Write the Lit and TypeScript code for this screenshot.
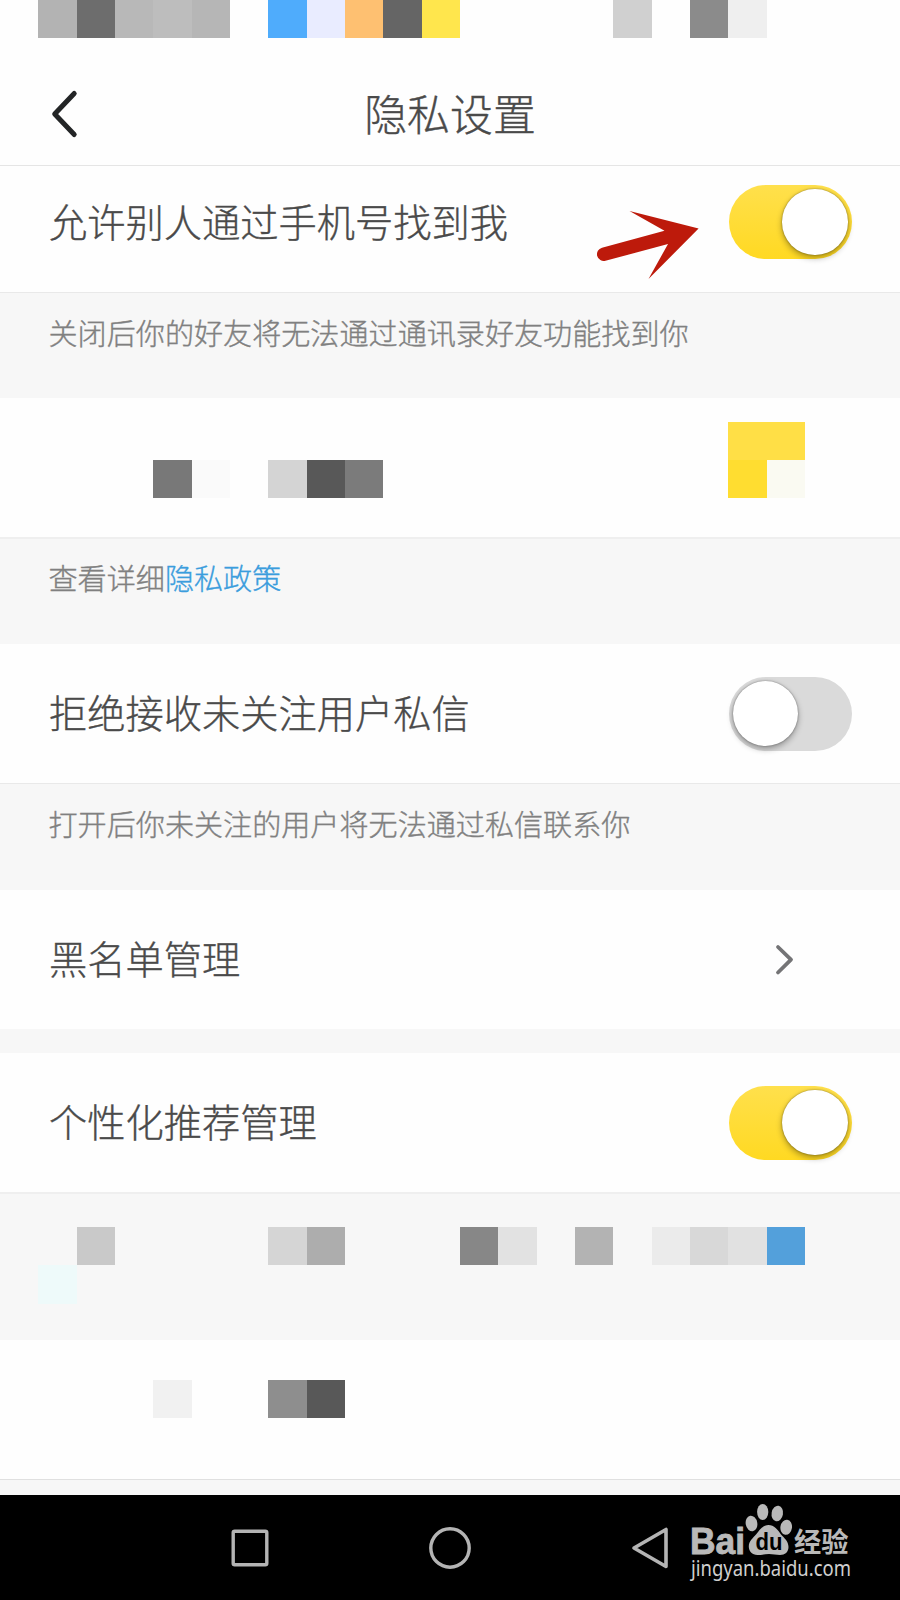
import { LitElement, html, css } from "lit";
import { customElement, property } from "lit/decorators.js";

// One mosaic tile: column, row, colour
type Tile = [number, number, string];

const STATUS: Tile[] = [
  [1, 1, "#b3b3b3"], [2, 1, "#6d6d6d"], [3, 1, "#b8b8b8"], [4, 1, "#bdbdbd"], [5, 1, "#b6b6b6"],
  [7, 1, "#4facfc"], [8, 1, "#e9ecff"], [9, 1, "#fec071"], [10, 1, "#656565"], [11, 1, "#ffe64d"],
  [16, 1, "#d0d0d0"], [18, 1, "#8b8b8b"], [19, 1, "#efefef"],
];
const HIDDEN_SWITCH: Tile[] = [
  [19, 1, "#ffdf46"], [20, 1, "#ffdf46"],
  [4, 2, "#787878"], [5, 2, "#fafafa"], [7, 2, "#d4d4d4"], [8, 2, "#585858"], [9, 2, "#7b7b7b"],
  [19, 2, "#ffdd30"], [20, 2, "#fafaf2"],
];
const HIDDEN_NOTE: Tile[] = [
  [2, 1, "#c9c9c9"], [7, 1, "#d5d5d5"], [8, 1, "#adadad"], [12, 1, "#878787"], [13, 1, "#e2e2e2"],
  [15, 1, "#b3b3b3"], [17, 1, "#ebebeb"], [18, 1, "#d8d8d8"], [19, 1, "#e1e1e1"], [20, 1, "#53a0db"],
  [1, 2, "#eefafa"],
];
const HIDDEN_ROW: Tile[] = [[4, 1, "#f1f1f1"], [7, 1, "#8e8e8e"], [8, 1, "#585858"]];

@customElement("mosaic-strip")
export class MosaicStrip extends LitElement {
  @property({ attribute: false }) tiles: Tile[] = [];

  static styles = css`
    :host {
      display: grid;
      grid-template-columns: repeat(23, 38.333px);
      grid-auto-rows: 38.333px;
    }
  `;

  render() {
    return this.tiles.map(
      ([c, r, colour]) => html`<i style="grid-column:${c + 1};grid-row:${r};background:${colour}"></i>`
    );
  }
}

@customElement("toggle-switch")
export class ToggleSwitch extends LitElement {
  @property({ type: Boolean, reflect: true }) on = false;

  static styles = css`
    :host {
      display: flex;
      align-items: center;
      box-sizing: border-box;
      width: 122.6px;
      height: 74px;
      padding: 0 4px;
      border-radius: 37px;
      background: #dadada;
    }
    :host([on]) {
      justify-content: flex-end;
      background: linear-gradient(#ffe04c, #ffd922);
    }
    .knob {
      width: 65.4px;
      height: 65.4px;
      border-radius: 50%;
      background: #fff;
      box-shadow: 0 0 2px rgba(0, 0, 0, 0.42), 0 3px 6px rgba(0, 0, 0, 0.33);
    }
  `;

  render() {
    return html`<div class="knob"></div>`;
  }
}

@customElement("app-root")
export class AppRoot extends LitElement {
  static styles = css`
    :host {
      display: flex;
      flex-direction: column;
      position: relative;
      width: 900px;
      height: 1600px;
      overflow: hidden;
      background: #f7f7f7;
      color: #4a4a4a;
      font-family: "Noto Sans CJK SC", sans-serif;
      font-weight: 300;
      -webkit-text-stroke: 0.35px currentColor;
    }
    .top {
      box-sizing: border-box;
      height: 166px;
      flex: none;
      background: #fefefe;
      border-bottom: 1px solid #e5e5e5;
    }
    .header {
      display: grid;
      grid-template-columns: 120px 1fr 120px;
      align-items: center;
      height: 150px;
    }
    .header svg {
      margin: 2px 0 0 48px;
    }
    h1 {
      margin: 0;
      padding-bottom: 3px;
      text-align: center;
      font-size: 42.9px;
      line-height: 60px;
      font-weight: 300;
    }
    .row {
      display: flex;
      align-items: center;
      justify-content: space-between;
      box-sizing: border-box;
      height: 139px;
      flex: none;
      padding: 0 48.5px 0 49px;
      background: #fefefe;
      font-size: 38.25px;
      line-height: 56px;
    }
    .row span {
      padding-bottom: 3px;
    }
    .row.first {
      height: 126px;
      padding-bottom: 14px;
    }
    .row.masked {
      align-items: flex-start;
      padding: 23.7px 0 0;
    }
    .row.masked.low {
      padding-top: 40px;
    }
    .chevron {
      margin-right: 55px;
    }
    .note {
      box-sizing: border-box;
      flex: none;
      height: 106px;
      padding: 18px 48.5px 0;
      border-top: 1px solid #e9e9e9;
      background: #f7f7f7;
      color: #808080;
      font-size: 29.1px;
      line-height: 42px;
    }
    .note.tall {
      height: 107px;
    }
    .note.soft {
      height: 107px;
      padding-top: 17px;
      border-top: 2px solid #efefef;
    }
    .note.masked {
      height: 148px;
      padding: 33px 0 0;
      border-top: 2px solid #efefef;
    }
    .link {
      color: #3b9ddd;
    }
    .gap {
      height: 24px;
      flex: none;
    }
    .tail {
      height: 16px;
      flex: none;
      box-sizing: border-box;
      border-top: 1px solid #e0e0e0;
    }
    .nav {
      display: flex;
      justify-content: center;
      align-items: center;
      gap: 150px;
      height: 105px;
      background: #000;
    }
    .arrow {
      position: absolute;
      left: 590px;
      top: 205px;
    }
    .brand {
      position: absolute;
      left: 685px;
      top: 1500px;
      overflow: visible;
      -webkit-text-stroke: 0;
    }
  `;

  render() {
    return html`
      <div class="top">
        <mosaic-strip .tiles=${STATUS}></mosaic-strip>
        <div class="header">
          <svg width="34" height="50" viewBox="0 0 34 50" fill="none" stroke="#232526" stroke-width="5" stroke-linecap="round" stroke-linejoin="round">
            <path d="M26.2 4.5 6.700 25 26.2 45.5" />
          </svg>
          <h1>隐私设置</h1>
        </div>
      </div>
      <div class="row first"><span>允许别人通过手机号找到我</span><toggle-switch on></toggle-switch></div>
      <div class="note">关闭后你的好友将无法通过通讯录好友功能找到你</div>
      <div class="row masked"><mosaic-strip .tiles=${HIDDEN_SWITCH}></mosaic-strip></div>
      <div class="note soft">查看详细<span class="link">隐私政策</span></div>
      <div class="row"><span>拒绝接收未关注用户私信</span><toggle-switch></toggle-switch></div>
      <div class="note tall">打开后你未关注的用户将无法通过私信联系你</div>
      <div class="row">
        <span>黑名单管理</span>
        <svg class="chevron" width="24" height="36" viewBox="0 0 24 36" fill="none" stroke="#747476" stroke-width="3.8" stroke-linecap="round" stroke-linejoin="round">
          <path d="M5 5 18 17.700 5 30.500" />
        </svg>
      </div>
      <div class="gap"></div>
      <div class="row"><span>个性化推荐管理</span><toggle-switch on></toggle-switch></div>
      <div class="note masked"><mosaic-strip .tiles=${HIDDEN_NOTE}></mosaic-strip></div>
      <div class="row masked low"><mosaic-strip .tiles=${HIDDEN_ROW}></mosaic-strip></div>
      <div class="tail"></div>
      <div class="nav">
        <svg width="50" height="50" fill="none" stroke="#b4b4b4" stroke-width="3.4">
          <rect x="8.2" y="8.2" width="33.6" height="33.6" rx="1.5" />
        </svg>
        <svg width="50" height="50" fill="none" stroke="#b4b4b4" stroke-width="3.4">
          <circle cx="25" cy="25" r="19.2" />
        </svg>
        <svg width="50" height="50" fill="none" stroke="#b4b4b4" stroke-width="3.6" stroke-linejoin="round">
          <path d="M9 25 41 6.5V43.5Z" />
        </svg>
      </div>

      <svg class="arrow" width="112" height="80" viewBox="590 205 112 80">
        <path fill="#bd1a0b" d="M698.6 228.5 629.5 211 664.5 230.7 602 247.7A6.7 6.7 0 0 0 605.5 260.8L668 244 648.5 279Z" />
      </svg>

      <svg class="brand" width="180" height="95" viewBox="685 1500 180 95" fill="#b9b9b9">
        <text x="690" y="1553.5" font-family="Liberation Sans" font-weight="700" font-size="37" textLength="55" lengthAdjust="spacingAndGlyphs" stroke="#b9b9b9" stroke-width="0.9">Bai</text>
        <ellipse cx="751.5" cy="1523.5" rx="5.8" ry="7.8" transform="rotate(-10 751.5 1523.5)" />
        <ellipse cx="762.7" cy="1512" rx="5.6" ry="8" />
        <ellipse cx="777.3" cy="1513.5" rx="5.7" ry="7.8" transform="rotate(10 777.3 1513.5)" />
        <ellipse cx="786.2" cy="1527.3" rx="5.8" ry="7.6" transform="rotate(8 786.2 1527.3)" />
        <path d="M768.5 1525C774 1525 778 1530 781 1534.5C784 1538 788.5 1541 788.5 1547C788.5 1552 785 1555 780 1555C776 1555 773 1554 769 1554C765 1554 761 1555 757.5 1555C752 1555 748.8 1551 748.8 1546.5C748.8 1541 753 1538 756 1534.5C759.5 1530 763 1525 768.5 1525Z" />
        <text x="755.5" y="1550" font-family="Liberation Sans" font-weight="700" font-size="23" textLength="27" lengthAdjust="spacingAndGlyphs" fill="#000">du</text>
        <text x="794" y="1551.5" font-family="Noto Sans CJK SC" font-weight="700" font-size="27.5" textLength="54.5" lengthAdjust="spacingAndGlyphs">经验</text>
        <text x="691" y="1575.5" font-family="Noto Sans" font-weight="400" font-size="22" textLength="160" lengthAdjust="spacingAndGlyphs" fill="#cfcfcf">jingyan.baidu.com</text>
      </svg>
    `;
  }
}
